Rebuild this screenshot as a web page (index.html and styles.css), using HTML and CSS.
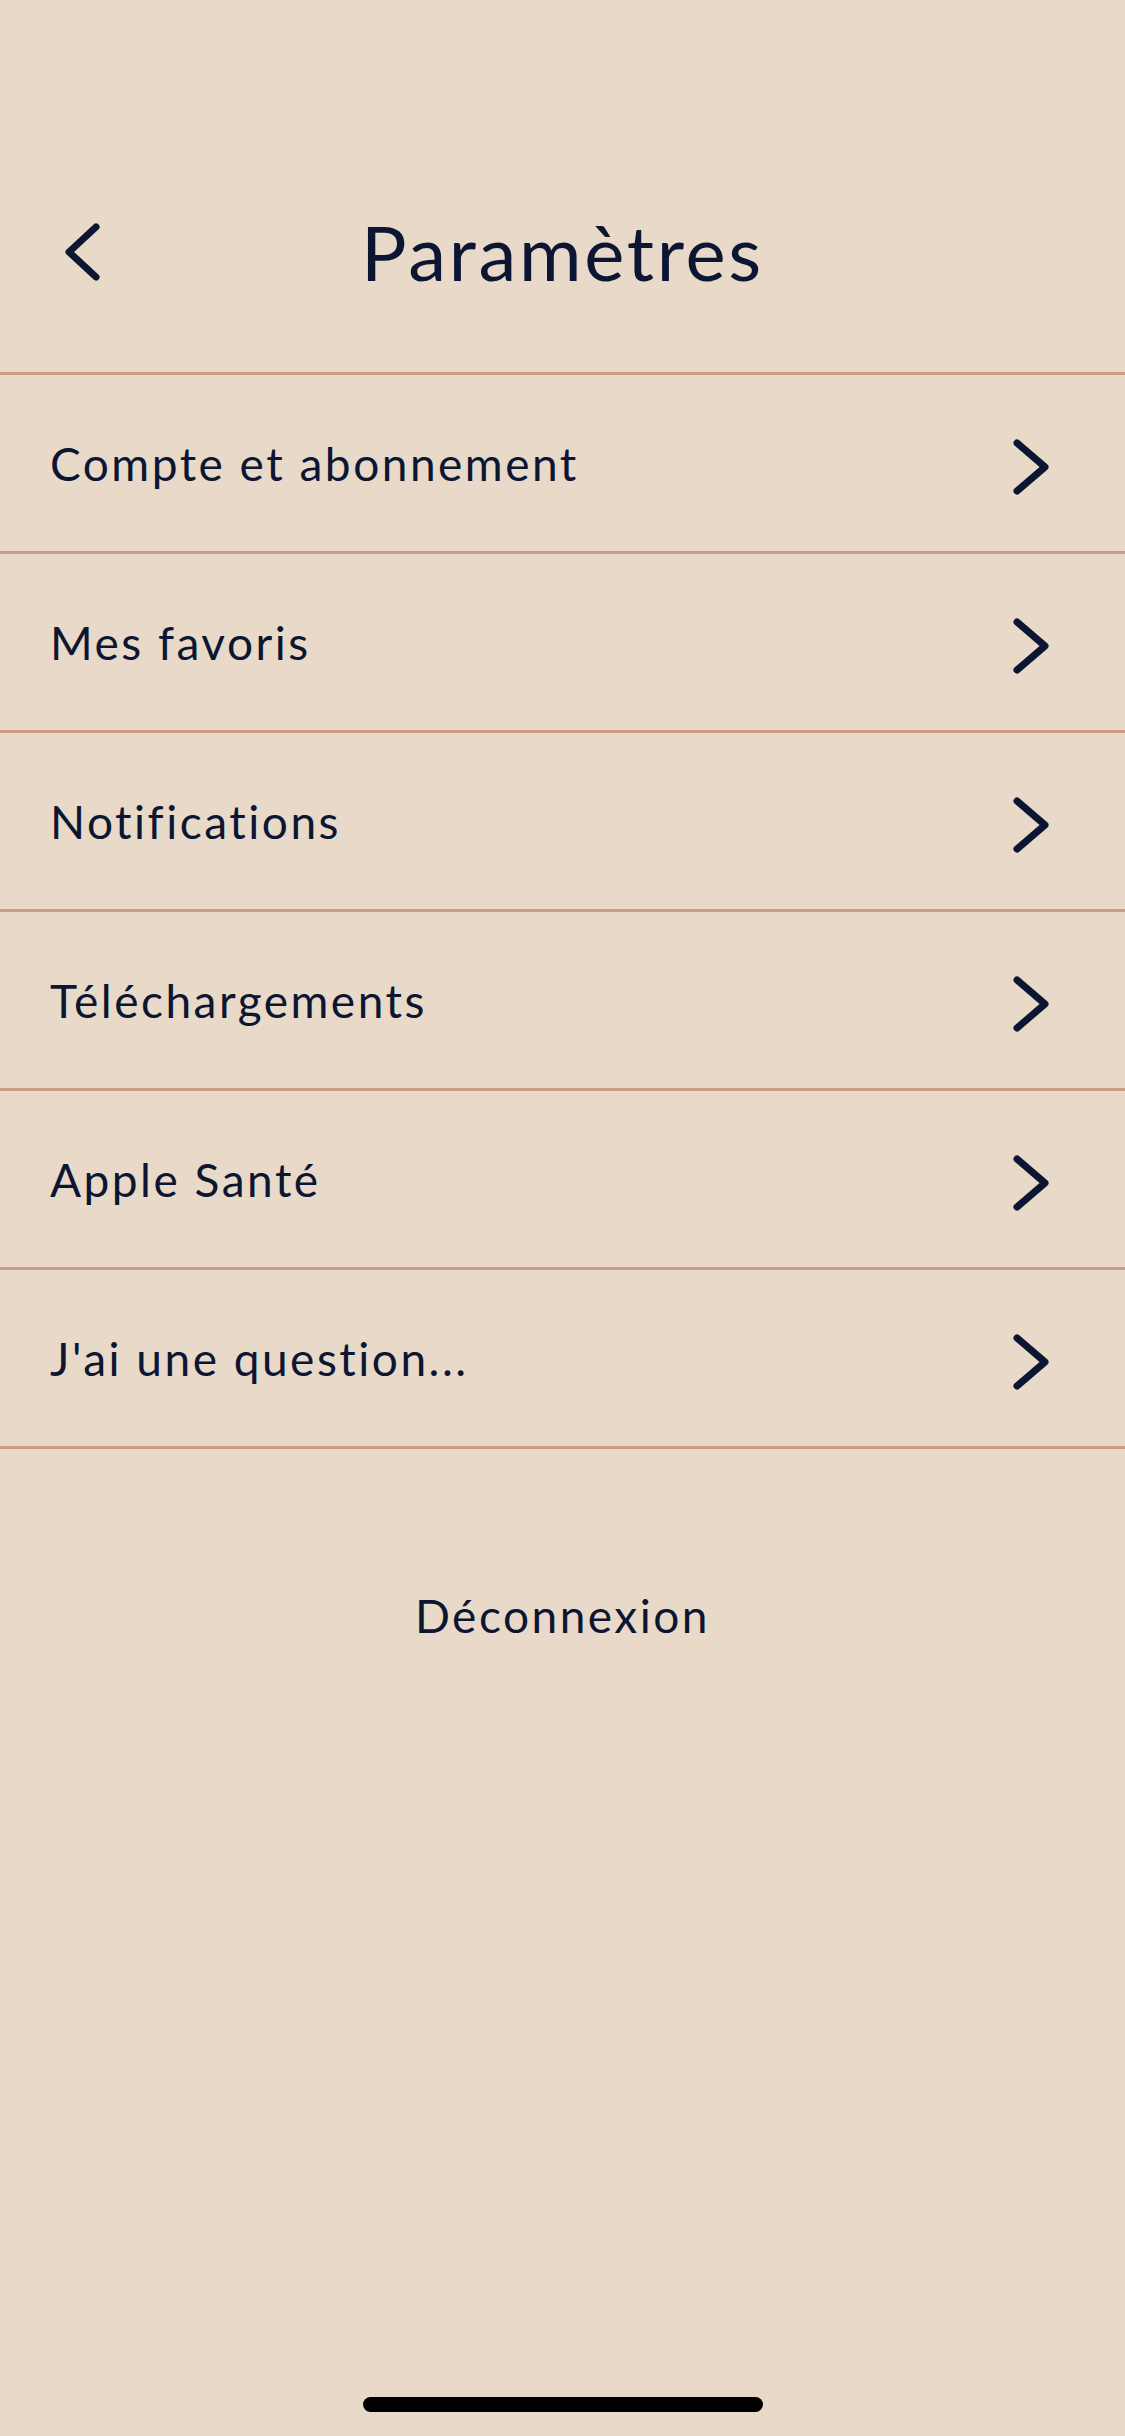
FILE: index.html
```html
<html>
<head>
<title>Paramètres</title>
<link rel="stylesheet" href="styles.css">
</head>
<body>
<div class="screen">

<div class="header">
  <a class="back" href="#">
    <svg width="40" height="60" viewBox="0 0 40 60"><path d="M33 5 L6 30 L33 55" /></svg>
  </a>
  <h1 class="title">Paramètres</h1>
  <span></span>
</div>

<ul class="menu">
  <li class="row"><span>Compte et abonnement</span>
    <svg width="40" height="60" viewBox="0 0 40 60"><path d="M6 6 L34 30 L6 54" /></svg></li>
  <li class="row"><span>Mes favoris</span>
    <svg width="40" height="60" viewBox="0 0 40 60"><path d="M6 6 L34 30 L6 54" /></svg></li>
  <li class="row"><span>Notifications</span>
    <svg width="40" height="60" viewBox="0 0 40 60"><path d="M6 6 L34 30 L6 54" /></svg></li>
  <li class="row"><span>Téléchargements</span>
    <svg width="40" height="60" viewBox="0 0 40 60"><path d="M6 6 L34 30 L6 54" /></svg></li>
  <li class="row"><span>Apple Santé</span>
    <svg width="40" height="60" viewBox="0 0 40 60"><path d="M6 6 L34 30 L6 54" /></svg></li>
  <li class="row"><span>J'ai une question...</span>
    <svg width="40" height="60" viewBox="0 0 40 60"><path d="M6 6 L34 30 L6 54" /></svg></li>
</ul>

<div class="logout">Déconnexion</div>

<div class="home-bar"></div>

</div>
</body>
</html>
```

FILE: styles.css
```css
body { margin:0; background:#e8d9c8; color:#0c1632; font-family:Lato, "Noto Sans", sans-serif; letter-spacing:2.5px; }
.screen { height:2436px; display:flex; flex-direction:column; }

.header { display:grid; grid-template-columns:1fr auto 1fr; align-items:center; height:120px; margin-top:192px; margin-bottom:60px; }
.back { margin-left:63px; display:flex; }
.back svg path, .row svg path { fill:none; stroke:#0c1632; stroke-width:7; stroke-linecap:round; stroke-linejoin:round; }
.title { margin:0; font-size:76px; font-weight:400; line-height:1; letter-spacing:2.7px; }

.menu { list-style:none; margin:0; padding:0; border-top:3px solid #cd9c84; }
.row { height:176px; border-bottom:3px solid #cd9c84; display:flex; align-items:center; justify-content:space-between; padding:0 74px 0 50px; font-size:46px; }
.row svg { margin-top:8px; }

.logout { text-align:center; font-size:46px; margin-top:139px; }

.home-bar { margin:auto auto 24px; width:400px; height:15px; border-radius:8px; background:#000; }
```
